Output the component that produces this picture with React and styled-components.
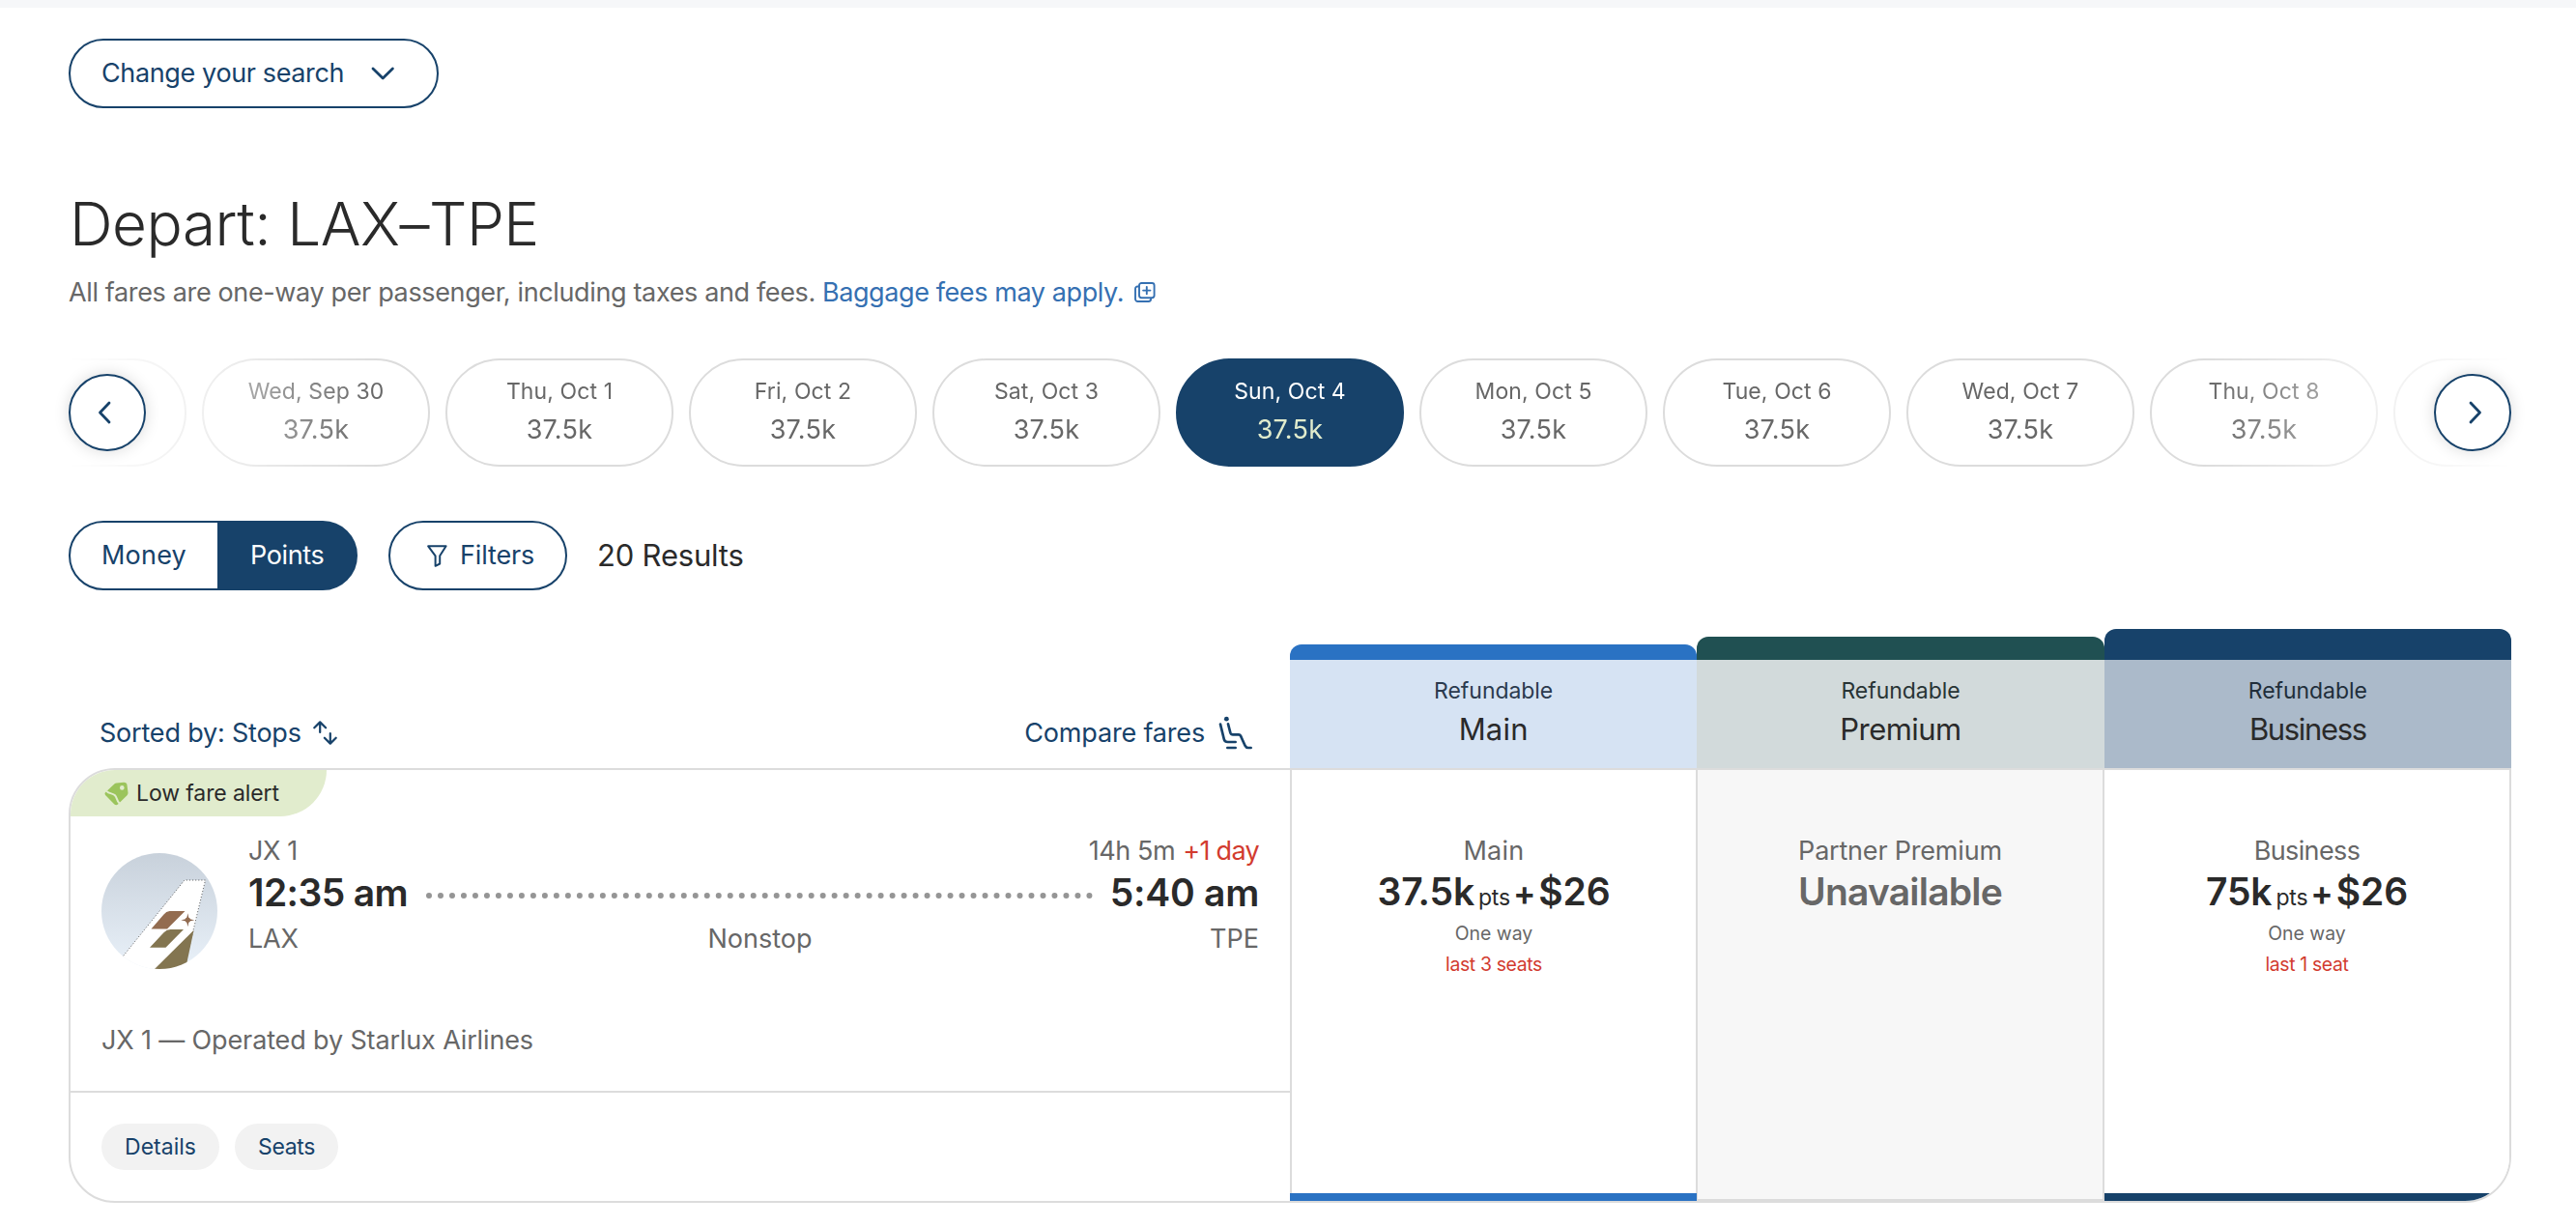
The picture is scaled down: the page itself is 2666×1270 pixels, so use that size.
import React from 'react';
import styled, { createGlobalStyle } from 'styled-components';

const navy = '#17426a';
const ink = '#2a2a2a';
const grey = '#676767';
const line = '#dcdcdc';
const red = '#d23b2f';

const GlobalStyle = createGlobalStyle`
  *, *::before, *::after { box-sizing: border-box; }
  body {
    margin: 0;
    background: #fff;
    color: ${ink};
    font-family: Inter, "Liberation Sans", sans-serif;
    overflow: hidden;
  }
  button { font: inherit; color: inherit; margin: 0; }
  svg { display: block; flex: none; }
`;

const Page = styled.div`
  height: 1270px;
  border-top: 8px solid #f6f7f9;
  padding: 32px 67px 0 71px;
`;

const Label = styled.span`
  font-size: ${(p) => p.$size || 27}px;
  font-weight: ${(p) => p.$weight || 400};
  letter-spacing: ${(p) => p.$track || 0}px;
  line-height: 1.2;
  white-space: nowrap;
  color: ${(p) => p.$color || 'inherit'};
`;

const SearchButton = styled.button`
  display: flex;
  align-items: center;
  gap: 28px;
  width: 383px;
  height: 72px;
  padding: 0 0 0 32px;
  border: 2px solid ${navy};
  border-radius: 36px;
  background: #fff;
  color: ${navy};
`;

const Title = styled.h1`
  margin: 80px 0 0;
  padding-left: 1px;
  font-size: 62px;
  font-weight: 300;
  line-height: 80px;
  letter-spacing: -0.5px;
`;

const Note = styled.p`
  display: flex;
  align-items: center;
  margin: 10px 0 0;
  height: 40px;
  font-size: 27px;
  letter-spacing: -0.36px;
  color: ${grey};
`;

const NoteLink = styled.a`
  display: flex;
  align-items: center;
  gap: 11px;
  margin-left: 7px;
  letter-spacing: -0.4px;
  color: #3570b2;
`;

const Carousel = styled.div`
  position: relative;
  height: 112px;
  margin-top: 49px;
`;

const Track = styled.div`
  overflow: hidden;
  mask-image: linear-gradient(
    to right,
    transparent 0,
    #000 320px,
    #000 calc(100% - 320px),
    transparent 100%
  );
`;

const Dates = styled.div`
  display: flex;
  gap: 16px;
  margin-left: -114px;
`;

const DatePill = styled.button`
  display: flex;
  flex: none;
  flex-direction: column;
  align-items: center;
  width: 236px;
  height: 112px;
  padding: 12px 0 0;
  border: 2px solid ${(p) => (p.$active ? navy : line)};
  border-radius: 56px;
  background: ${(p) => (p.$active ? navy : '#fff')};
  color: ${(p) => (p.$active ? '#fff' : grey)};
`;

const DateDay = styled.span`
  font-size: 23px;
  line-height: 40px;
  letter-spacing: 0.1px;
`;

const DatePrice = styled.span`
  font-size: 27px;
  line-height: 40px;
  letter-spacing: 0.3px;
  color: ${(p) => (p.$active ? '#e1eccd' : 'inherit')};
`;

const Arrow = styled.button`
  position: absolute;
  top: 16px;
  ${(p) => p.$side}: 0;
  display: flex;
  align-items: center;
  justify-content: center;
  width: 80px;
  height: 80px;
  padding: ${(p) => (p.$side === 'left' ? '0 6px 0 0' : '0 0 0 6px')};
  border: 2px solid ${navy};
  border-radius: 50%;
  background: #fff;
  box-shadow: 0 0 16px rgba(0, 0, 0, 0.15);
`;

const Controls = styled.div`
  display: flex;
  align-items: center;
  height: 72px;
  margin-top: 56px;
`;

const Toggle = styled.div`
  display: flex;
  width: 299px;
  height: 72px;
  border: 2px solid ${navy};
  border-radius: 36px;
  background: linear-gradient(to right, #fff 152px, ${navy} 152px);
  overflow: hidden;
`;

const ToggleOption = styled.button`
  width: ${(p) => (p.$active ? 143 : 152)}px;
  padding: 0 0 0 ${(p) => (p.$active ? 34 : 32)}px;
  border: 0;
  text-align: left;
  background: transparent;
  color: ${(p) => (p.$active ? '#fff' : navy)};
`;

const FilterButton = styled.button`
  display: flex;
  align-items: center;
  gap: 13px;
  width: 185px;
  height: 72px;
  margin: 0 31px 0 32px;
  padding: 0 0 0 38px;
  border: 2px solid ${navy};
  border-radius: 36px;
  background: #fff;
  color: ${navy};
`;

const FareHead = styled.div`
  display: flex;
  align-items: flex-end;
  height: 144px;
  margin-top: 40px;
`;

const SortBar = styled.div`
  display: flex;
  justify-content: space-between;
  align-items: center;
  width: 1264px;
  height: 72px;
  padding: 0 38px 0 32px;
  color: ${navy};
`;

const InlineAction = styled.div`
  display: flex;
  align-items: center;
  gap: ${(p) => p.$gap}px;
`;

const FareColumn = styled.div`
  flex: 1;
  height: ${(p) => 112 + p.$cap}px;
  border-top: ${(p) => p.$cap}px solid ${(p) => p.$accent};
  border-radius: 12px 12px 0 0;
  background: ${(p) => p.$tint};
  display: flex;
  flex-direction: column;
  align-items: center;
  padding-top: 12px;
`;

const ColumnKind = styled.span`
  font-size: 23px;
  line-height: 40px;
  letter-spacing: -0.05px;
  color: ${(p) => p.$color};
`;

const ColumnName = styled.span`
  font-size: 31px;
  line-height: 40px;
  letter-spacing: ${(p) => p.$track}px;
`;

const Card = styled.section`
  display: grid;
  grid-template-columns: 1262px 422px 421px 419px;
  height: 450px;
  border: 2px solid ${line};
  border-radius: 48px 0 48px 48px;
  overflow: hidden;
`;

const Flight = styled.div`
  display: flex;
  flex-direction: column;
`;

const Alert = styled.div`
  display: flex;
  align-items: center;
  gap: 8px;
  width: 265px;
  height: 48px;
  padding: 1px 0 0 35px;
  background: #e1eccd;
  border-bottom-right-radius: 48px;
`;

const Itinerary = styled.div`
  display: flex;
  gap: 32px;
  height: 204px;
  padding: 15px 32px 0 32px;
`;

const LogoSlot = styled.div`
  padding-top: 23px;
`;

const Legs = styled.div`
  flex: 1;
`;

const LegRow = styled.div`
  display: flex;
  align-items: center;
  justify-content: space-between;
  height: ${(p) => p.$height}px;
  padding-top: ${(p) => p.$drop || 0}px;
  color: ${grey};
`;

const Stops = styled.span`
  margin-left: 12px;
  font-size: 27px;
  line-height: 1.2;
`;

const Time = styled.span`
  font-size: 39px;
  font-weight: 600;
  letter-spacing: ${(p) => p.$track}px;
  color: ${ink};
  white-space: nowrap;
`;

const Dots = styled.span`
  flex: 1;
  height: 0;
  margin: 8px 18px 0 19px;
  border-top: 6px dotted #959595;
`;

const Duration = styled.span`
  display: flex;
  gap: 8px;
`;

const Operator = styled.div`
  display: flex;
  align-items: center;
  height: 80px;
  padding: 0 0 24px 32px;
  color: ${grey};
`;

const Actions = styled.div`
  display: flex;
  gap: 16px;
  padding: 32px 0 0 32px;
  flex: 1;
  border-top: 2px solid ${line};
`;

const Chip = styled.button`
  width: ${(p) => p.$width}px;
  height: 48px;
  padding: 1px 0 0;
  border: 0;
  border-radius: 24px;
  background: #f2f2f2;
  color: ${navy};
`;

const Fare = styled.div`
  display: flex;
  flex-direction: column;
  align-items: center;
  padding-top: 64px;
  background: ${(p) => (p.$disabled ? '#f7f7f7' : '#fff')};
  border-left: ${(p) => (p.$first ? 2 : 0)}px solid ${line};
  border-right: ${(p) => (p.$last ? 0 : 2)}px solid ${line};
`;

const FareName = styled.span`
  font-size: 27px;
  line-height: 40px;
  letter-spacing: ${(p) => p.$track}px;
  color: ${grey};
`;

const FarePrice = styled.div`
  display: flex;
  align-items: baseline;
  height: 45px;
  font-size: 39px;
  line-height: 44px;
  font-weight: 600;
  letter-spacing: ${(p) => p.$track}px;
  color: ${(p) => (p.$muted ? grey : ink)};
`;

const Unit = styled.span`
  margin: 0 3px 0 4px;
  font-size: 23px;
  font-weight: 400;
  letter-spacing: -0.2px;
`;

const Plus = styled.span`
  margin-right: 3px;
  font-size: 35px;
  line-height: 30px;
`;

const FareNote = styled.span`
  font-size: 19.4px;
  line-height: ${(p) => (p.$alert ? 24 : 40)}px;
  letter-spacing: ${(p) => (p.$alert ? -0.35 : 0)}px;
  color: ${(p) => (p.$alert ? red : grey)};
`;

const FareFoot = styled.div`
  align-self: stretch;
  height: ${(p) => p.$height}px;
  margin: auto ${(p) => (p.$wide ? '-1px' : '0')} 0 ${(p) => (p.$wide ? '-2px' : '0')};
  background: ${(p) => p.$color};
`;

function Chevron({ direction }) {
  const paths = {
    down: ['M2 2l10.2 10L22.4 2', 25, 14],
    left: ['M12 2L2.5 12 12 22', 14, 24],
    right: ['M2 2l9.5 10L2 22', 14, 24],
  };
  const [d, w, h] = paths[direction];
  return (
    <svg width={w} height={h} viewBox={`0 0 ${w} ${h}`} fill="none" stroke={navy} strokeWidth="2.8" strokeLinecap="round" strokeLinejoin="round">
      <path d={d} />
    </svg>
  );
}

function PopupIcon() {
  return (
    <svg width="22" height="21" viewBox="0 0 22 21" fill="none" stroke="#3570b2" strokeWidth="1.9" strokeLinejoin="round" strokeLinecap="round">
      <rect x="5" y="1" width="15.6" height="15.2" rx="2.4" />
      <path d="M4.4 4.5H3.4A2.4 2.4 0 0 0 1 6.9v10.6A2.5 2.5 0 0 0 3.5 20h11.2a2.4 2.4 0 0 0 2.4-2.4v-1" />
      <path d="M12.8 4.9v7.4M9.1 8.6h7.4" />
    </svg>
  );
}

function FunnelIcon() {
  return (
    <svg width="21" height="23" viewBox="0 0 21 23" fill="none" stroke={navy} strokeWidth="2" strokeLinejoin="round">
      <path d="M1.2 1.3h18.4l-6.4 10v8.2l-4.6 2.3V11.3z" />
    </svg>
  );
}

function SortIcon() {
  return (
    <svg width="25" height="25" viewBox="0 0 25 25" fill="none" stroke={navy} strokeWidth="2.2" strokeLinecap="round" strokeLinejoin="round">
      <path d="M7.2 12V1.4M1.3 7.3l5.9-5.9 5.9 5.9" />
      <path d="M17.8 13v10.6M11.9 17.7l5.9 5.9 5.9-5.9" />
    </svg>
  );
}

function SeatIcon() {
  return (
    <svg width="36" height="35.3" viewBox="64 34 108 106" fill="none" stroke={navy} strokeWidth="8" strokeLinecap="round" strokeLinejoin="round">
      <circle cx="89" cy="43.5" r="7.2" fill={navy} stroke="none" />
      <path d="M70 60l11 45q2 10 12 10h24" />
      <path d="M94 59l7 27q2 6 8 6h18q4 0 6 4l14 31q3 6 9 6h9" />
      <path d="M92 133h25" />
    </svg>
  );
}

function TagIcon() {
  return (
    <svg width="25" height="25" viewBox="0 0 25 25">
      <path d="M12.6 1.6 20.2.7q3 0 3.3 2.800l1 8q.1 1.600-1 2.800L14 23.400q-1.800 1.600-3.600 0L1.300 14.300q-1.600-1.700 0-3.400l9-8.400q1-.8 2.300-.9z" fill="#9bc45c" />
      <path d="M2.200 9.800c3 3.400 6.400 1.800 8.800 4.400s1.500 5.600 4.800 8.600" fill="none" stroke="#e1eccd" strokeWidth="2" />
      <circle cx="18.300" cy="6.400" r="2.300" fill="#e1eccd" />
    </svg>
  );
}

function TailLogo() {
  return (
    <svg width="120" height="120" viewBox="0 0 120 120">
      <defs>
        <linearGradient id="sky" x1="0" y1="0" x2="0" y2="1">
          <stop offset="0" stopColor="#c8d1db" />
          <stop offset="1" stopColor="#e9f1f9" />
        </linearGradient>
        <clipPath id="disc">
          <circle cx="60" cy="60" r="60" />
        </clipPath>
      </defs>
      <g clipPath="url(#disc)">
        <rect width="120" height="120" fill="url(#sky)" />
        <path d="M86 28h21.700L87 114v6H10l12.700-13.700z" fill="#fff" />
        <path d="M22.700 106.300 83.500 31q1.500-2.800 3.500-3h20.500L86.800 114" fill="none" stroke="#4a4a4a" strokeWidth=".8" strokeDasharray="1.200 1.900" />
        <path d="M70.500 60h16L68 78.400H51.500L64.500 63.500q2.500-3.300 6-3.500z" fill="#936c50" />
        <path d="M71.500 79H85L66.500 97.700H50L64.500 82.300q3-3.200 7-3.300z" fill="#837550" />
        <path d="M95.600 79.700 55 120h32z" fill="#837550" />
        <path d="M89.300 62.300l1.100 5.900 5.900 1.100-5.900 1.100-1.100 5.900-1.100-5.900-5.900-1.100 5.900-1.100z" fill="#7b5138" />
        <circle cx="89.300" cy="69.300" r="2.700" fill="#936c50" />
      </g>
    </svg>
  );
}

const days = [
  ['', ''],
  ['Wed, Sep 30', '37.5k'],
  ['Thu, Oct 1', '37.5k'],
  ['Fri, Oct 2', '37.5k'],
  ['Sat, Oct 3', '37.5k'],
  ['Sun, Oct 4', '37.5k'],
  ['Mon, Oct 5', '37.5k'],
  ['Tue, Oct 6', '37.5k'],
  ['Wed, Oct 7', '37.5k'],
  ['Thu, Oct 8', '37.5k'],
  ['', ''],
];
const selectedDay = 5;

const columns = [
  { name: 'Main', cap: 16, accent: '#2a72c3', tint: '#d6e3f3', kind: '#2b3a4e', track: 0.2 },
  { name: 'Premium', cap: 24, accent: '#205052', tint: '#d2dadb', kind: '#283435', track: -0.55 },
  { name: 'Business', cap: 32, accent: navy, tint: '#abbaca', kind: '#212e3a', track: -1.35 },
];

export default function App() {
  return (
    <Page>
      <GlobalStyle />
      <SearchButton>
        <Label $track={-0.37}>Change your search</Label>
        <Chevron direction="down" />
      </SearchButton>

      <Title>Depart: LAX–TPE</Title>
      <Note>
        All fares are one-way per passenger, including taxes and fees.
        <NoteLink>
          Baggage fees may apply.
          <PopupIcon />
        </NoteLink>
      </Note>

      <Carousel>
        <Track>
          <Dates>
            {days.map(([day, price], i) => (
              <DatePill key={i} $active={i === selectedDay}>
                <DateDay>{day}</DateDay>
                <DatePrice $active={i === selectedDay}>{price}</DatePrice>
              </DatePill>
            ))}
          </Dates>
        </Track>
        <Arrow $side="left"><Chevron direction="left" /></Arrow>
        <Arrow $side="right"><Chevron direction="right" /></Arrow>
      </Carousel>

      <Controls>
        <Toggle>
          <ToggleOption><Label $track={0.2}>Money</Label></ToggleOption>
          <ToggleOption $active><Label $track={-0.37}>Points</Label></ToggleOption>
        </Toggle>
        <FilterButton>
          <FunnelIcon />
          <Label $track={-0.15}>Filters</Label>
        </FilterButton>
        <Label $size={31} $track={-0.2}>20 Results</Label>
      </Controls>

      <FareHead>
        <SortBar>
          <InlineAction $gap={12}>
            <Label $track={-0.2}>Sorted by: Stops</Label>
            <SortIcon />
          </InlineAction>
          <InlineAction $gap={14}>
            <Label $track={-0.18}>Compare fares</Label>
            <SeatIcon />
          </InlineAction>
        </SortBar>
        {columns.map((c) => (
          <FareColumn key={c.name} $cap={c.cap} $accent={c.accent} $tint={c.tint}>
            <ColumnKind $color={c.kind}>Refundable</ColumnKind>
            <ColumnName $track={c.track}>{c.name}</ColumnName>
          </FareColumn>
        ))}
      </FareHead>

      <Card>
        <Flight>
          <Alert>
            <TagIcon />
            <Label $size={23} $track={-0.1}>Low fare alert</Label>
          </Alert>
          <Itinerary>
            <LogoSlot><TailLogo /></LogoSlot>
            <Legs>
              <LegRow $height={40} $drop={2}>
                <Label $track={-0.4}>JX 1</Label>
                <Duration>
                  <Label $track={-0.4}>14h 5m</Label>
                  <Label $track={-0.7} $color={red}>+1 day</Label>
                </Duration>
              </LegRow>
              <LegRow $height={46}>
                <Time $track={-0.6}>12:35 am</Time>
                <Dots />
                <Time $track={-0.25}>5:40 am</Time>
              </LegRow>
              <LegRow $height={52} $drop={1}>
                <Label $track={-0.15}>LAX</Label>
                <Stops>Nonstop</Stops>
                <Label>TPE</Label>
              </LegRow>
            </Legs>
          </Itinerary>
          <Operator>
            <Label $track={-0.14}>JX 1 — Operated by Starlux Airlines</Label>
          </Operator>
          <Actions>
            <Chip $width={122}><Label $size={23}>Details</Label></Chip>
            <Chip $width={107}><Label $size={23} $track={-0.37}>Seats</Label></Chip>
          </Actions>
        </Flight>

        <Fare $first>
          <FareName $track={0.3}>Main</FareName>
          <FarePrice $track={-0.15}>
            37.5k<Unit>pts</Unit><Plus>+</Plus>$26
          </FarePrice>
          <FareNote>One way</FareNote>
          <FareNote $alert>last 3 seats</FareNote>
          <FareFoot $height={8} $color="#2a72c3" $wide />
        </Fare>
        <Fare $disabled>
          <FareName $track={-0.2}>Partner Premium</FareName>
          <FarePrice $muted $track={-0.8}>Unavailable</FarePrice>
          <FareFoot $height={2} $color={line} />
        </Fare>
        <Fare $last>
          <FareName $track={-0.64}>Business</FareName>
          <FarePrice $track={-0.15}>
            75k<Unit>pts</Unit><Plus>+</Plus>$26
          </FarePrice>
          <FareNote>One way</FareNote>
          <FareNote $alert>last 1 seat</FareNote>
          <FareFoot $height={8} $color={navy} />
        </Fare>
      </Card>
    </Page>
  );
}
